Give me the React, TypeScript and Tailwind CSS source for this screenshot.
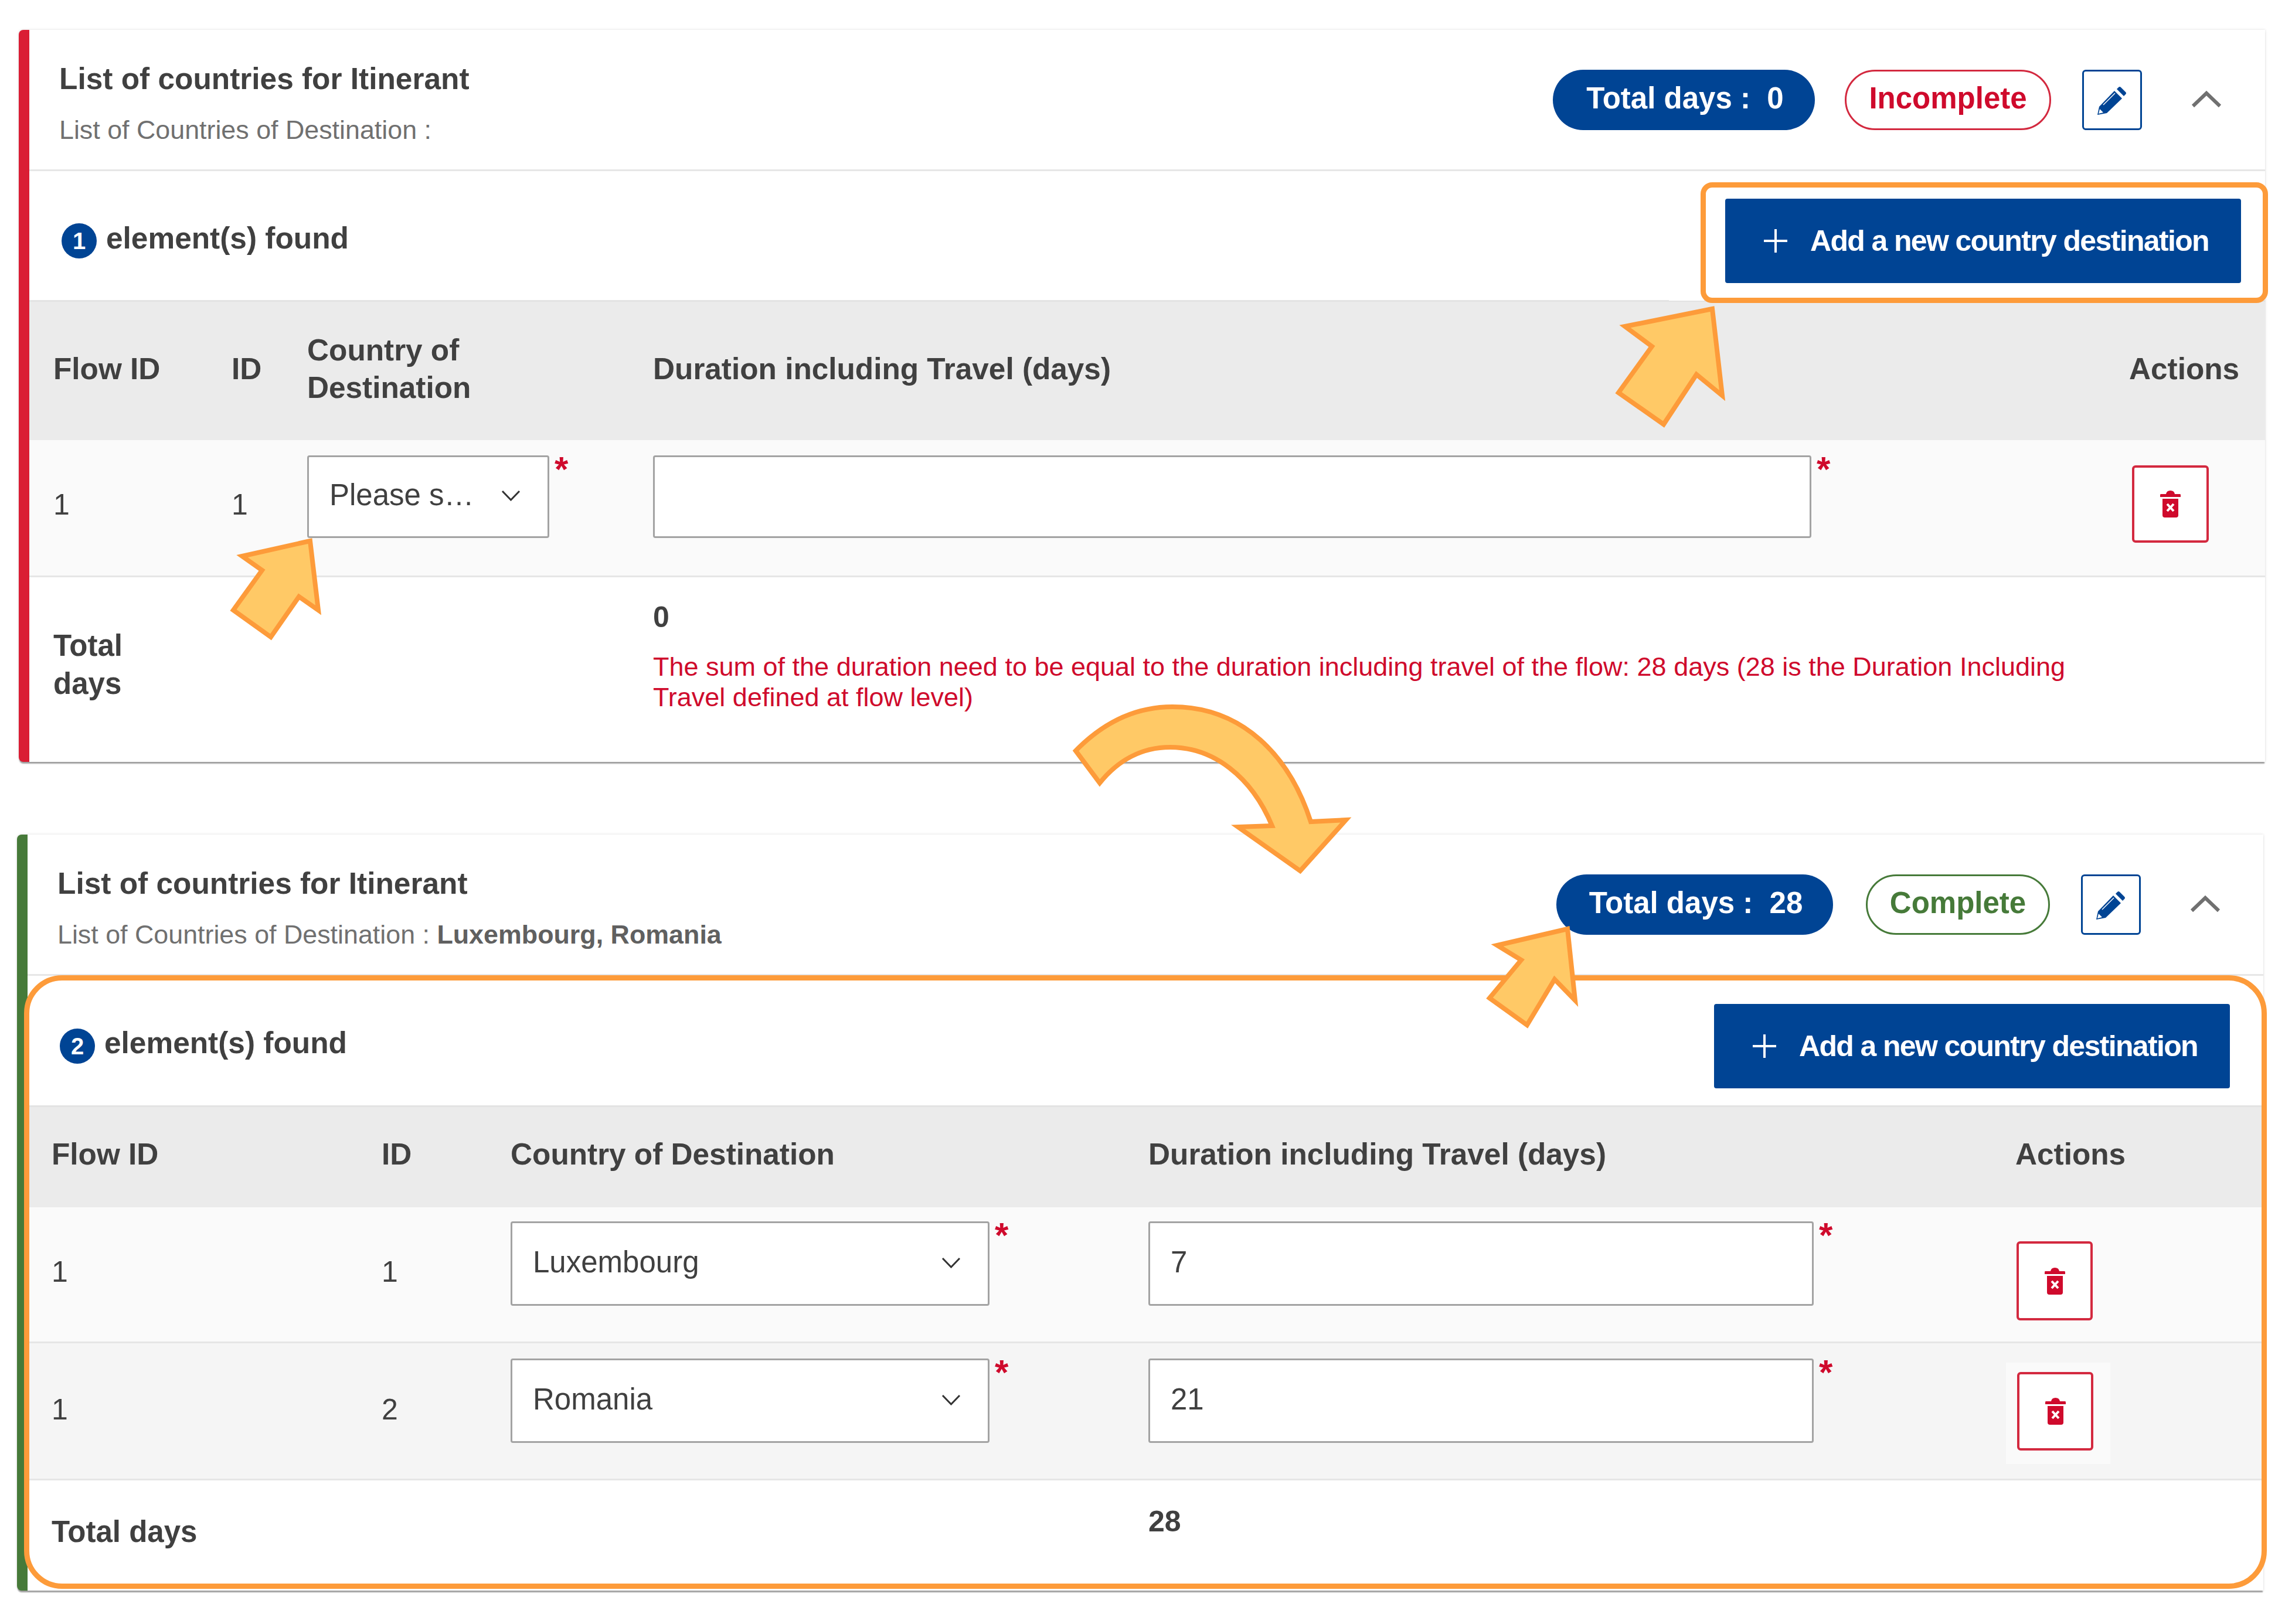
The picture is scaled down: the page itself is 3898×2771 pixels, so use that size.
import type { ReactNode } from 'react';

const FONT = "font-['Liberation_Sans',Arial,sans-serif]";

const Pencil = () => (
  <svg width="50" height="50" viewBox="0 0 50 50" fill="#004494">
    <path d="M0 50 L3 36 L29 9 L42 22 L16 47 Z" />
    <path d="M33 6 L36 3 Q38 1 40 3 L48 11 Q50 13 48 15 L45 18 Z" />
    <path d="M4 40 L10 46 L2 48 Z" fill="#fff" />
    <path d="M10 33 L30 13" stroke="#fff" strokeWidth="1.5" />
  </svg>
);

const Trash = () => (
  <svg width="35" height="46" viewBox="0 0 35 46" fill="#cf0a2c">
    <path d="M10 6 Q11 0 17.5 0 Q24 0 25 6 L34 6 Q35 6 35 8 L35 11 L0 11 L0 8 Q0 6 1 6 Z" />
    <path d="M4 14 H31 V42 Q31 46 27 46 H8 Q4 46 4 42 Z" />
    <path d="M12 23 L23 35 M23 23 L12 35" stroke="#fff" strokeWidth="4" />
  </svg>
);

const ChevronDown = () => (
  <svg width="33" height="19" viewBox="0 0 33 19" fill="none" stroke="#333" strokeWidth="3">
    <path d="M2 2 L16.5 17 L31 2" />
  </svg>
);

const ChevronUp = () => (
  <svg width="52" height="30" viewBox="0 0 52 30" fill="none" stroke="#707070" strokeWidth="6">
    <path d="M3 27 L26 5 L49 27" />
  </svg>
);

const Star = () => <span className="-mt-[6px] text-[60px] leading-[60px] font-bold text-[#cf0a2c]">*</span>;

const Field = ({ width, height, children }: { width: string; height: string; children?: ReactNode }) => (
  <div className="flex items-start gap-[9px]">
    <div className={`flex ${width} ${height} items-center justify-between rounded-[4px] border-[3px] border-[#a3a3a3] bg-white pr-[46px] pb-[4px] pl-[35px] text-[51px] text-[#404040]`}>
      {children}
    </div>
    <Star />
  </div>
);

const DeleteButton = ({ className }: { className: string }) => (
  <div className={`flex items-center justify-center rounded-[6px] border-[4px] border-[#d3293f] bg-white ${className}`}>
    <Trash />
  </div>
);

const ToolbarButton = ({ margin }: { margin: string }) => (
  <div className={`flex h-[144px] w-[880px] items-center gap-[39px] rounded-[4px] bg-[#004494] pl-[66px] ${margin}`}>
    <svg width="40" height="40" viewBox="0 0 40 40" stroke="#fff" strokeWidth="4">
      <path d="M20 0 V40 M0 20 H40" />
    </svg>
    <span className="text-[50px] font-bold tracking-[-1.65px] whitespace-nowrap text-white">Add a new country destination</span>
  </div>
);

const Badge = ({ n }: { n: number }) => (
  <span className="flex h-[60px] w-[60px] items-center justify-center rounded-full bg-[#004494] text-[40px] font-bold text-white">{n}</span>
);

const CardHeader = ({ days, status, detail, pillWidth, statusWidth, statusClass, gap, pad }: {
  days: number; status: string; detail?: string; pillWidth: string; statusWidth: string; statusClass: string; gap: string; pad: string;
}) => (
  <div className="flex h-[241px] justify-between border-b-[3px] border-[#e6e6e6]">
    <div className="pt-[52px] pl-[51px]">
      <div className="text-[51.4px] leading-[62px] font-bold text-[#404040]">List of countries for Itinerant</div>
      <div className="mt-[29px] text-[44.8px] leading-[54px] text-[#707070]">
        List of Countries of Destination : {detail && <b className="text-[#606060]">{detail}</b>}
      </div>
    </div>
    <div className={`mt-[68px] flex h-[103px] items-center ${pad}`}>
      <div className={`flex h-full ${pillWidth} items-center justify-center rounded-full bg-[#004494] pb-[4px] pl-[4px] text-[51px] font-bold whitespace-pre text-white`}>
        {`Total days :  ${days}`}
      </div>
      <div className={`${gap} flex h-full ${statusWidth} items-center justify-center rounded-full border-[3px] bg-white pb-[4px] text-[51px] font-bold ${statusClass}`}>
        {status}
      </div>
      <div className="ml-[53px] flex h-full w-[102px] items-center justify-center rounded-[6px] border-[3px] border-[#004494] bg-white">
        <Pencil />
      </div>
      <div className="ml-[84px] -mt-[3px]">
        <ChevronUp />
      </div>
    </div>
  </div>
);

export default function App() {
  const head1 = 'grid grid-cols-[304px_129px_590px_2518px_1fr] pl-[41px]';
  const head2 = 'grid grid-cols-[563px_220px_1088px_1479px_1fr] pl-[41px]';
  const headClass = 'items-center bg-[#ebebeb] border-t-[3px] border-[#e3e3e3] text-[51.3px] leading-[64px] font-bold text-[#404040]';
  const cell = 'mt-[80px] text-[50px] leading-[60px] text-[#404040]';

  return (
    <div className={`relative h-[2771px] w-[3898px] overflow-hidden bg-white ${FONT}`}>
      <div className="flex flex-col pt-[51px]">
        {/* Incomplete state */}
        <div className="ml-[32px] h-[1249px] w-[3832px] rounded-l-[8px] border-l-[18px] border-[#da1e34] bg-white shadow-[0_0_4px_rgba(0,0,0,0.15),0_4px_2px_-1px_rgba(0,0,0,0.35)]">
          <CardHeader days={0} status="Incomplete" pillWidth="w-[447px]" statusWidth="w-[352px]" statusClass="border-[#d3293f] text-[#cf0a2c]" gap="ml-[51px]" pad="pr-[74px]" />
          <div className="flex h-[220px] items-center justify-between pt-[18px]">
            <div className="flex items-center gap-[16px] pl-[55px] text-[51.4px] font-bold text-[#404040]">
              <Badge n={1} />
              <span className="-mt-[8px]">element(s) found</span>
            </div>
            <ToolbarButton margin="mr-[41px]" />
          </div>
          <div className={`${head1} ${headClass} h-[239px] pb-[6px]`}>
            <div>Flow ID</div>
            <div>ID</div>
            <div>Country of<br />Destination</div>
            <div>Duration including Travel (days)</div>
            <div>Actions</div>
          </div>
          <div className={`${head1} h-[234px] items-start border-b-[3px] border-[#e6e6e6] bg-[#fafafa]`}>
            <div className={cell}>1</div>
            <div className={cell}>1</div>
            <div className="mt-[26px]">
              <Field width="w-[413px]" height="h-[141px]">
                <span className="whitespace-nowrap">Please s…</span>
                <ChevronDown />
              </Field>
            </div>
            <div className="mt-[26px]">
              <Field width="w-[1976px]" height="h-[141px]" />
            </div>
            <DeleteButton className="mt-[43px] ml-[5px] h-[132px] w-[131px]" />
          </div>
          <div className={`${head1} h-[313px] items-start`}>
            <div className="col-span-3 mt-[84px] w-[200px] text-[51px] leading-[65px] font-bold text-[#404040]">Total days</div>
            <div className="col-span-2 mt-[38px] pr-[300px]">
              <div className="text-[50px] leading-[60px] font-bold text-[#404040]">0</div>
              <div className="mt-[29px] text-[45px] leading-[52px] text-[#cf0a2c]">
                The sum of the duration need to be equal to the duration including travel of the flow: 28 days (28 is the Duration Including Travel defined at flow level)
              </div>
            </div>
          </div>
        </div>

        {/* Complete state */}
        <div className="mt-[124px] ml-[29px] h-[1290px] w-[3832px] rounded-l-[8px] border-l-[18px] border-[#467a39] bg-white shadow-[0_0_4px_rgba(0,0,0,0.15),0_4px_2px_-1px_rgba(0,0,0,0.35)]">
          <CardHeader days={28} status="Complete" detail="Luxembourg, Romania" pillWidth="w-[472px]" statusWidth="w-[314px]" statusClass="border-[#467a39] text-[#467a39]" gap="ml-[56px]" pad="pr-[73px]" />
          <div className="flex h-[221px] items-center justify-between pt-[19px]">
            <div className="flex items-center gap-[16px] pl-[55px] text-[51.4px] font-bold text-[#404040]">
              <Badge n={2} />
              <span className="-mt-[10px]">element(s) found</span>
            </div>
            <ToolbarButton margin="mr-[57px]" />
          </div>
          <div className={`${head2} ${headClass} h-[174px] pb-[9px]`}>
            <div>Flow ID</div>
            <div>ID</div>
            <div>Country of Destination</div>
            <div>Duration including Travel (days)</div>
            <div>Actions</div>
          </div>
          <div className={`${head2} h-[232px] items-start border-b-[3px] border-[#e6e6e6] bg-[#fafafa]`}>
            <div className={cell}>1</div>
            <div className={cell}>1</div>
            <div className="mt-[24px]">
              <Field width="w-[817px]" height="h-[144px]">
                <span>Luxembourg</span>
                <ChevronDown />
              </Field>
            </div>
            <div className="mt-[24px]">
              <Field width="w-[1135px]" height="h-[144px]">
                <span>7</span>
              </Field>
            </div>
            <DeleteButton className="mt-[58px] ml-[2px] h-[135px] w-[130px]" />
          </div>
          <div className={`${head2} h-[234px] items-start border-b-[3px] border-[#e6e6e6] bg-[#f5f5f5]`}>
            <div className="mt-[83px] text-[50px] leading-[60px] text-[#404040]">1</div>
            <div className="mt-[83px] text-[50px] leading-[60px] text-[#404040]">2</div>
            <div className="mt-[26px]">
              <Field width="w-[817px]" height="h-[144px]">
                <span>Romania</span>
                <ChevronDown />
              </Field>
            </div>
            <div className="mt-[26px]">
              <Field width="w-[1135px]" height="h-[144px]">
                <span>21</span>
              </Field>
            </div>
            <div className="mt-[33px] -ml-[16px] flex h-[173px] w-[178px] items-start bg-[#fafafa] pt-[16px] pl-[19px]">
              <DeleteButton className="h-[134px] w-[130px]" />
            </div>
          </div>
          <div className={`${head2} items-start`}>
            <div className="col-span-3 mt-[58px] text-[51px] leading-[60px] font-bold text-[#404040]">Total days</div>
            <div className="mt-[40px] text-[50px] leading-[60px] font-bold text-[#404040]">28</div>
          </div>
        </div>
      </div>

      {/* annotations laid over the screenshot */}
      <div className="absolute top-[508px] left-[2847px] h-[5px] w-[60px] bg-white" />
      <div className="absolute top-[1881px] left-[2826px] h-[5px] w-[1004px] bg-white" />
      <div className="absolute top-[311px] left-[2901px] h-[206px] w-[968px] rounded-[20px] border-[9px] border-[#fd9b3a]" />
      <div className="absolute top-[1664px] left-[41px] h-[1047px] w-[3826px] rounded-[65px] border-[9px] border-[#fd9b3a]" />
      <svg className="absolute top-0 left-0" width="3898" height="2771" viewBox="0 0 3898 2771" fill="#ffc966" stroke="#fd9b3a" strokeWidth="8">
        <path d="M2921 527 L2772 557 L2818 591 L2761 670 L2838 724 L2894 639 L2938 675 Z" />
        <path d="M529 923 L413 949 L447 973 L398 1041 L462 1087 L510 1018 L543 1041 Z" />
        <path d="M2674 1585 L2554 1613 L2595 1638 L2541 1703 L2605 1749 L2652 1671 L2687 1707 Z" />
        <path d="M1835 1281 C1880 1235 1935 1206 2000 1206 C2120 1206 2200 1290 2236 1402 L2296 1399 L2218 1486 L2112 1411 L2170 1409 C2135 1325 2070 1275 1996 1275 C1945 1275 1905 1300 1876 1336 Z" />
      </svg>
    </div>
  );
}
